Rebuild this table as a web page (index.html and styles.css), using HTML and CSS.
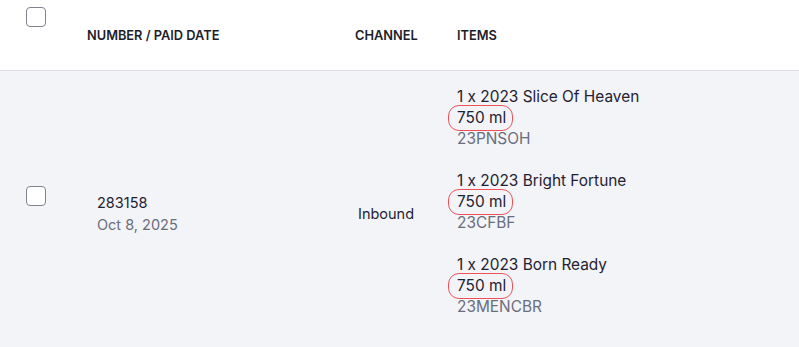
FILE: index.html
```html
<html lang="en">
    <head>
        <meta charset="UTF-8">
        <meta name="viewport" content="width=device-width, initial-scale=1.0">
        <title>Orders</title>

        <link rel="stylesheet" href="styles.css">
    </head>
    <body>

        <div class="orders">
            <div class="orders-head">
                <div class="cell cell-check"><span class="check"></span></div>
                <div class="cell cell-number">Number / Paid date</div>
                <div class="cell cell-channel">Channel</div>
                <div class="cell cell-items">Items</div>
            </div>

            <div class="orders-row">
                <div class="cell cell-check"><span class="check"></span></div>
                <div class="cell cell-number">
                    <div class="number">283158</div>
                    <div class="muted">Oct 8, 2025</div>
                </div>
                <div class="cell cell-channel">Inbound</div>
                <div class="cell cell-items">
                    <div class="item">
                        <div>1 x 2023 Slice Of Heaven</div>
                        <div><span class="size">750 ml</span></div>
                        <div class="muted">23PNSOH</div>
                    </div>
                    <div class="item">
                        <div>1 x 2023 Bright Fortune</div>
                        <div><span class="size">750 ml</span></div>
                        <div class="muted">23CFBF</div>
                    </div>
                    <div class="item">
                        <div>1 x 2023 Born Ready</div>
                        <div><span class="size">750 ml</span></div>
                        <div class="muted">23MENCBR</div>
                    </div>
                </div>
            </div>
        </div>

    </body>
</html>
```

FILE: styles.css
```css
html, body{
    padding: 0;
    margin: 0;
    background: #fff;
    font-family: Inter, 'Noto Sans', sans-serif;
    font-feature-settings: "calt" 0;
    color: #1f2230;
}

.orders-head,
.orders-row{
    display: grid;
    grid-template-columns: 87px 268px 102px 1fr;
}

.orders-head{
    height: 70px;
    align-items: center;
    border-bottom: 1px solid #dfe0e6;
    font-size: 12.8px;
    font-weight: 600;
    text-transform: uppercase;
    color: #1c1e29;
}

.orders-head .cell-check{
    align-self: start;
    padding-top: 7px;
}

.cell-check{
    padding-left: 26px;
}

.check{
    display: block;
    width: 18px;
    height: 18px;
    border: 1px solid #80838f;
    border-radius: 4px;
    background: #fff;
}

.orders-row{
    background: #f3f4f8;
    align-items: center;
    font-size: 15.4px;
    line-height: 21px;
    padding: 15px 0 6px;
}

.orders-row .cell-check{
    align-self: start;
    padding-top: 100px;
}

.orders-row .cell-number{
    padding-left: 10px;
    font-size: 14.5px;
    line-height: 22px;
}

.orders-row .cell-channel{
    padding-left: 3px;
    font-size: 14.5px;
}

.orders-row .cell-items{
    padding-bottom: 24px;
}

.muted{
    color: #6a6e7c;
}

.item + .item{
    margin-top: 21px;
}

.size{
    position: relative;
}

/* red marker ring drawn over the bottle size */
.size::after{
    content: "";
    position: absolute;
    top: -3px;
    bottom: -4px;
    left: -9px;
    right: -7px;
    border: 1.5px solid #ef5059;
    border-radius: 11px;
}
```
